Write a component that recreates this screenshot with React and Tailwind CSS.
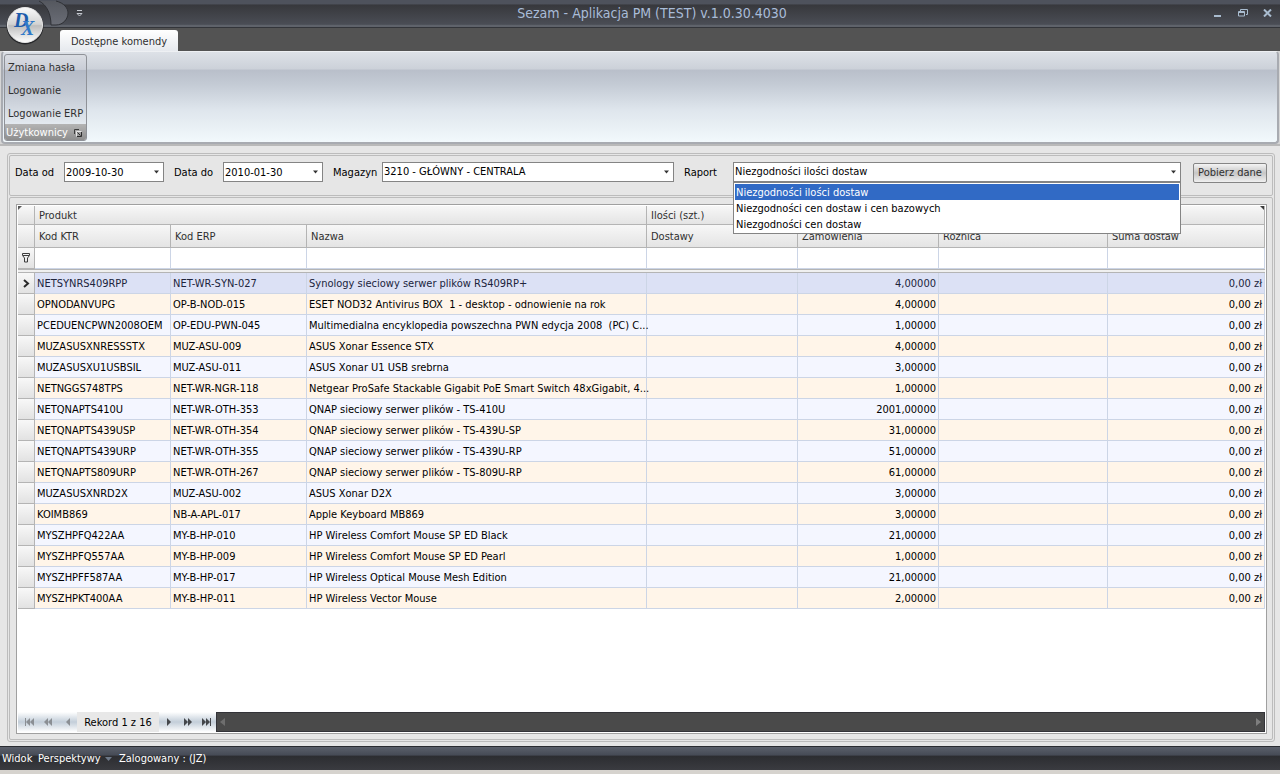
import React, { useState } from 'react';

const rows = [
  ['NETSYNRS409RPP', 'NET-WR-SYN-027', 'Synology sieciowy serwer plików RS409RP+', '4,00000'],
  ['OPNODANVUPG', 'OP-B-NOD-015', 'ESET NOD32 Antivirus BOX  1 - desktop - odnowienie na rok', '4,00000'],
  ['PCEDUENCPWN2008OEM', 'OP-EDU-PWN-045', 'Multimedialna encyklopedia powszechna PWN edycja 2008  (PC) C...', '1,00000'],
  ['MUZASUSXNRESSSTX', 'MUZ-ASU-009', 'ASUS Xonar Essence STX', '4,00000'],
  ['MUZASUSXU1USBSIL', 'MUZ-ASU-011', 'ASUS Xonar U1 USB srebrna', '3,00000'],
  ['NETNGGS748TPS', 'NET-WR-NGR-118', 'Netgear ProSafe Stackable Gigabit PoE Smart Switch 48xGigabit, 4...', '1,00000'],
  ['NETQNAPTS410U', 'NET-WR-OTH-353', 'QNAP sieciowy serwer plików - TS-410U', '2001,00000'],
  ['NETQNAPTS439USP', 'NET-WR-OTH-354', 'QNAP sieciowy serwer plików - TS-439U-SP', '31,00000'],
  ['NETQNAPTS439URP', 'NET-WR-OTH-355', 'QNAP sieciowy serwer plików - TS-439U-RP', '51,00000'],
  ['NETQNAPTS809URP', 'NET-WR-OTH-267', 'QNAP sieciowy serwer plików - TS-809U-RP', '61,00000'],
  ['MUZASUSXNRD2X', 'MUZ-ASU-002', 'ASUS Xonar D2X', '3,00000'],
  ['KOIMB869', 'NB-A-APL-017', 'Apple Keyboard MB869', '3,00000'],
  ['MYSZHPFQ422AA', 'MY-B-HP-010', 'HP Wireless Comfort Mouse SP ED Black', '21,00000'],
  ['MYSZHPFQ557AA', 'MY-B-HP-009', 'HP Wireless Comfort Mouse SP ED Pearl', '1,00000'],
  ['MYSZHPFF587AA', 'MY-B-HP-017', 'HP Wireless Optical Mouse Mesh Edition', '21,00000'],
  ['MYSZHPKT400AA', 'MY-B-HP-011', 'HP Wireless Vector Mouse', '2,00000'],
];

const reports = [
  'Niezgodności ilości dostaw',
  'Niezgodności cen dostaw i cen bazowych',
  'Niezgodności cen dostaw',
];

const columns = ['Kod KTR', 'Kod ERP', 'Nazwa', 'Dostawy', 'Zamówienia', 'Różnica', 'Suma dostaw'];

const field = 'h-5 w-full appearance-none rounded-none border border-[#848484] bg-white pr-4 pl-px text-black outline-none';
const headCell = 'border-r border-b border-[#b4b4b4] bg-linear-to-b from-[#f7f7f7] to-[#e4e4e4] px-1 pt-[2px] pb-0 text-left font-normal text-[#303030]';
const handleCell = 'border-r border-b border-[#b4b4b4] bg-linear-to-b from-[#f8f8f8] to-[#e2e2e2] p-0';

const Arrow = () => (
  <svg className="pointer-events-none absolute top-2 right-[5px]" width="5" height="4" viewBox="0 0 5 4">
    <path d="M0 0.5h5L2.5 3.5z" fill="#333" />
  </svg>
);

const Field = ({ id, label, className, children }) => (
  <div className={`flex items-center ${className}`}>
    <label htmlFor={id} className="w-[49px] shrink-0 pt-[2px]">{label}</label>
    <div className="relative min-w-0 flex-1">
      {children}
      <Arrow />
    </div>
  </div>
);

const TitleBar = () => (
  <header className="relative flex h-7 items-center border-b border-[#33353a] bg-[linear-gradient(#4e525c_15%,#37383c_18%,#4a4d55_90%,#5f636b_94%)]">
    <svg className="absolute top-0 left-0 z-10" width="90" height="46" viewBox="0 0 90 46">
      <defs>
        <linearGradient id="orb" x1="0" y1="0" x2="0" y2="1">
          <stop offset="0" stopColor="#fafafa" />
          <stop offset="0.48" stopColor="#d2d2d2" />
          <stop offset="0.52" stopColor="#bdbdbd" />
          <stop offset="1" stopColor="#ffffff" />
        </linearGradient>
        <linearGradient id="lobe" x1="0" y1="0" x2="0" y2="1">
          <stop offset="0" stopColor="#55585f" />
          <stop offset="1" stopColor="#6a6d76" />
        </linearGradient>
      </defs>
      <path d="M39 1h17c8 2 12 7 12 12s-5 12-12 12H51C51 14 47 5 39 1z" fill="url(#lobe)" />
      <path d="M39 1c8 4 12 13 12 24h5c7 0 12-6 12-12 0-5-4-10-12-12" fill="none" stroke="#2f3136" />
      <circle cx="25" cy="26" r="18.5" fill="#26272a" />
      <circle cx="25" cy="25" r="17.5" fill="url(#orb)" stroke="#e8e8e8" />
      <text x="14" y="27" fontFamily="Liberation Serif, serif" fontStyle="italic" fontWeight="bold" fontSize="20" fill="#1c5bab">
        D<tspan x="21" dy="8" fill="#2f79c9">X</tspan>
      </text>
      <path d="M77 10.5h5" stroke="#c5c9d0" />
      <path d="M77 13.5h5l-2.500 2.500z" fill="none" stroke="#c5c9d0" />
    </svg>
    <h1 className="flex-1 pb-px pl-6 text-center text-sm text-[#a9bcd8]">Sezam - Aplikacja PM (TEST) v.1.0.30.4030</h1>
    <div className="absolute top-[3px] right-0 flex">
      <button aria-label="Minimalizuj" className="flex h-5 w-[25px] items-center justify-center">
        <svg width="9" height="9" viewBox="0 0 9 9"><path d="M1 7h7" stroke="#a9bccf" strokeWidth="2" /></svg>
      </button>
      <button aria-label="Przywróć" className="flex h-5 w-[25px] items-center justify-center">
        <svg width="10" height="8" viewBox="0 0 10 8" fill="none" stroke="#a9bccf">
          <path d="M2.500 2V0.500h7v5H8" />
          <path d="M0.500 2.500h6v4.500h-6zM0 3.500h7" />
        </svg>
      </button>
      <button aria-label="Zamknij" className="flex h-5 w-[25px] items-center justify-center">
        <svg width="9" height="8" viewBox="0 0 9 8"><path d="M1 0.500l7 7M8 0.500l-7 7" stroke="#a9bccf" strokeWidth="2" /></svg>
      </button>
    </div>
  </header>
);

const Ribbon = () => (
  <>
    <nav className="flex h-[23px] items-end bg-[#535353] pl-[60px]">
      <button className="h-[21px] rounded-t-[3px] bg-linear-to-b from-white to-[#e6e9ee] px-[11px] pt-[2px] text-[#303030]">Dostępne komendy</button>
    </nav>
    <section className="bg-[#d6d6d6] px-px">
      <div className="flex rounded-[4px] border-2 border-t border-[#a8abb1] border-t-[#eef0f3] bg-[linear-gradient(#dde1e7,#ccd1d9_19%,#b9bfca_20%,#c3cad4_35%,#dfe6ed_65%,#f2f9fc)] pt-[2px] pr-px pb-px pl-px">
        <div className="rounded-[3px] border border-[#8f9298] bg-[linear-gradient(#dadde3,#c9cdd6_17%,#b4bac6_18%,#c3c9d3_45%,#e4eaf0_82%)]">
          <div className="flex flex-col items-start">
            {['Zmiana hasła', 'Logowanie', 'Logowanie ERP'].map((item) => (
              <button key={item} className="h-[23px] px-[3px] pt-[2px] text-[#303030]">{item}</button>
            ))}
          </div>
          <div className="flex h-4 items-center justify-between rounded-b-[2px] bg-linear-to-b from-[#b4b4b4] to-[#8e8e8e] pt-px pr-1 pl-px text-white">
            Użytkownicy
            <svg width="8" height="8" viewBox="0 0 8 8" fill="none">
              <path d="M0.500 5V0.500H5" stroke="#3c3c3c" />
              <path d="M2.500 7.500V2.500H7.500" stroke="#e6e6e6" />
              <path d="M3.500 3.500l3 3M3 7.500h4.500V3" stroke="#2c2c2c" />
            </svg>
          </div>
        </div>
      </div>
    </section>
  </>
);

const Filters = ({ report, setReport }) => (
  <form className="relative flex h-[41px] items-start gap-[10px] rounded-[2px] border border-[#bcbcbc] px-[5px] pt-[6px]" onSubmit={(e) => e.preventDefault()}>
    <Field id="from" label="Data od" className="w-[149px]">
      <input id="from" className={field} defaultValue="2009-10-30" />
    </Field>
    <Field id="to" label="Data do" className="w-[149px]">
      <input id="to" className={field} defaultValue="2010-01-30" />
    </Field>
    <Field id="store" label="Magazyn" className="w-[341px]">
      <select id="store" className={field}>
        <option>3210 - GŁÓWNY - CENTRALA</option>
      </select>
    </Field>
    <Field id="report" label="Raport" className="min-w-0 flex-1">
      <select id="report" className={field} value={report} onChange={(e) => setReport(e.target.value)}>
        {reports.map((r) => <option key={r}>{r}</option>)}
      </select>
      <ul role="listbox" aria-label="Raport" className="absolute top-5 right-0 left-0 z-20 border border-[#848484] bg-white p-px text-black">
        {reports.map((r) => (
          <li
            key={r}
            role="option"
            aria-selected={r === report}
            onClick={() => setReport(r)}
            className={`h-4 pt-[2px] pl-px ${r === report ? 'bg-[#316ac5] text-white' : ''}`}
          >
            {r}
          </li>
        ))}
      </ul>
    </Field>
    <button type="submit" className="mt-px ml-[2px] h-5 w-[74px] rounded-[2px] border border-[#858585] bg-linear-to-b from-[#f4f4f4] via-[#c6c6c6] via-50% to-[#f0f0f0] whitespace-nowrap text-[#303030]">
      Pobierz dane
    </button>
  </form>
);

const Grid = () => (
  <table className="w-full table-fixed border-separate border-spacing-0">
    <colgroup>
      <col className="w-[17px]" />
      <col className="w-[136px]" />
      <col className="w-[136px]" />
      <col className="w-[340px]" />
      <col className="w-[151px]" />
      <col className="w-[141px]" />
      <col className="w-[169px]" />
      <col />
    </colgroup>
    <thead>
      <tr className="h-[19px]">
        <td className={`${handleCell} align-top`}>
          <svg className="block" width="4" height="4" viewBox="0 0 4 4"><path d="M0 0h4L0 4z" fill="#5a5a5a" /></svg>
        </td>
        <th colSpan="3" className={headCell}>Produkt</th>
        <th colSpan="4" className={`${headCell} relative`}>
          Ilości (szt.)
          <svg className="absolute top-0 right-0" width="4" height="4" viewBox="0 0 4 4"><path d="M0 0h4v4z" fill="#3a3a3a" /></svg>
        </th>
      </tr>
      <tr className="h-[23px]">
        <td className={handleCell}></td>
        {columns.map((c) => <th key={c} className={headCell}>{c}</th>)}
      </tr>
      <tr className="h-[21px]">
        <td className={handleCell}>
          <svg className="mx-auto" width="8" height="10" viewBox="0 0 8 10" fill="none" stroke="#3c3c3c">
            <path d="M0.500 0.500h7v2l-2 2.500v4h-3v-4l-2-2.500zM1 2.500h6" />
          </svg>
        </td>
        {columns.map((c) => <td key={c} className="border-r border-b border-[#ccd5e6] bg-white p-0"></td>)}
      </tr>
      <tr className="h-1">
        <td colSpan="8" className="border-y border-[#b4b4b4] bg-[#f0f0f0] p-0"></td>
      </tr>
    </thead>
    <tbody>
      {rows.map((r, i) => {
        const bg = i === 0 ? 'bg-[#dce1f5] text-[#20243c]' : i % 2 ? 'bg-[#fff5e9]' : 'bg-[#f4f6ff]';
        const cell = `border-r border-b border-[#ccd5e6] px-[2px] pt-[2px] pb-0 whitespace-pre ${bg}`;
        return (
          <tr key={r[0]} className="h-[21px]">
            <td className={handleCell}>
              {i === 0 && (
                <svg className="mx-auto" width="7" height="9" viewBox="0 0 7 9" fill="none" stroke="#2b2b2b" strokeWidth="2">
                  <path d="M1 1l4 3.500l-4 3.500" />
                </svg>
              )}
            </td>
            <td className={cell}>{r[0]}</td>
            <td className={cell}>{r[1]}</td>
            <td className={cell}>{r[2]}</td>
            <td className={cell}></td>
            <td className={`${cell} text-right`}>{r[3]}</td>
            <td className={cell}></td>
            <td className={`${cell} text-right`}>0,00 zł</td>
          </tr>
        );
      })}
    </tbody>
  </table>
);

const NavButton = ({ label, d, muted }) => (
  <button aria-label={label} className="flex h-full w-[19px] items-center justify-center">
    <svg width="10" height="8" viewBox="0 0 10 8" className={muted ? 'fill-[#8b8f94]' : 'fill-[#44474b]'}>
      <path d={d} />
    </svg>
  </button>
);

const Navigator = () => (
  <div className="flex h-5">
    <div className="flex bg-linear-to-b from-white via-[#c3ced9] via-50% to-white pl-[2px]">
      <NavButton muted label="Pierwszy" d="M0 0h1v8H0zM5 0v8L1 4zM9 0v8L5 4z" />
      <NavButton muted label="Poprzednia strona" d="M4 0v8L0 4zM8 0v8L4 4z" />
      <NavButton muted label="Poprzedni" d="M7 0v8L3 4z" />
      <span className="flex w-[82px] items-center justify-center bg-[#e8e8e8] pt-[2px] text-black">Rekord 1 z 16</span>
      <NavButton label="Następny" d="M3 0v8l4-4z" />
      <NavButton label="Następna strona" d="M1 0v8l4-4zM5 0v8l4-4z" />
      <NavButton label="Ostatni" d="M0 0v8l4-4zM4 0v8l4-4zM8 0h1v8H8z" />
    </div>
    <div className="flex flex-1 items-center justify-between border border-[#333338] bg-[#4a4a4a] px-[3px]">
      <svg width="5" height="8" viewBox="0 0 5 8"><path d="M5 0v8L0 4z" fill="#6e6e6e" /></svg>
      <svg width="5" height="8" viewBox="0 0 5 8"><path d="M0 0v8l5-4z" fill="#7e7e7e" /></svg>
    </div>
  </div>
);

const App = () => {
  const [report, setReport] = useState(reports[0]);

  return (
    <div className="flex min-h-screen flex-col bg-[#d6d3ce] font-['DejaVu_Sans_Condensed',Tahoma,sans-serif] text-[11px] leading-[14px] text-black">
      <TitleBar />
      <Ribbon />
      <main className="flex flex-1 flex-col border-t-2 border-[#b9b9b9] bg-[#e6e6e6] pt-[7px] pr-[5px] pb-1 pl-[7px]">
        <div className="flex flex-1 flex-col rounded-[3px] border border-[#bcbcbc] p-px">
          <Filters report={report} setReport={setReport} />
          <div className="mt-px flex flex-1 flex-col rounded-[2px] border border-[#bcbcbc] pt-[6px] pr-[5px] pb-[5px] pl-[6px]">
            <div className="flex flex-1 flex-col border border-[#a0a0a0] bg-white p-px">
              <div className="flex-1">
                <Grid />
              </div>
              <Navigator />
            </div>
          </div>
        </div>
      </main>
      <footer className="mb-1 flex h-6 items-center border-t border-[#2a2c31] bg-[linear-gradient(#5b606b,#464b56_35%,#2c2d31_40%,#3a3b40)] pt-px pl-[2px] text-white">
        <button className="w-9 text-left">Widok</button>
        <button className="flex w-[81px] items-center gap-1">
          Perspektywy
          <svg width="7" height="4" viewBox="0 0 7 4"><path d="M0 0h7L3.500 4z" fill="#6d7888" /></svg>
        </button>
        <span>Zalogowany : (JZ)</span>
      </footer>
    </div>
  );
};

export default App;
